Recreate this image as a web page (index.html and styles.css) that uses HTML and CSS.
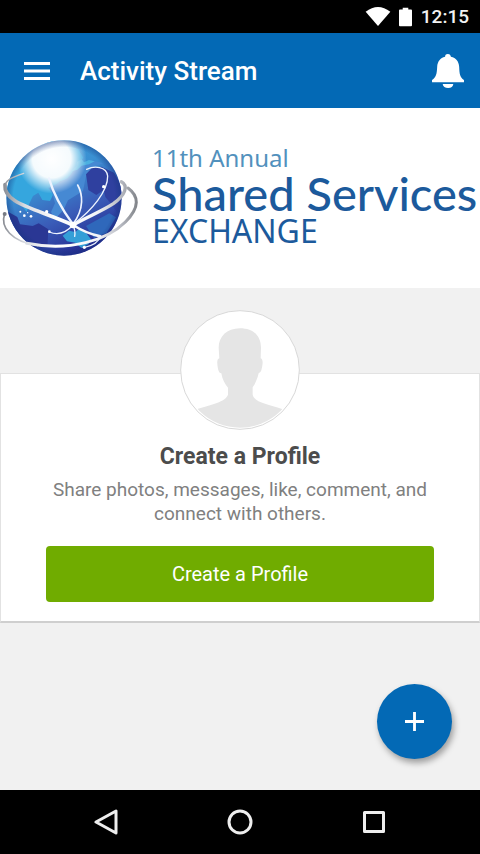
FILE: index.html
```html
<!DOCTYPE html>
<html lang="en">
<head>
<meta charset="utf-8">
<meta name="viewport" content="width=device-width, initial-scale=1">
<title>Activity Stream</title>
<link rel="stylesheet" href="styles.css">
</head>
<body>
<div class="status">
  <svg class="wifi" viewBox="0 0 26 20" aria-hidden="true"><path d="M0 5Q13-5 26 5L13 20Z"/></svg>
  <svg class="battery" viewBox="0 0 14 20" aria-hidden="true"><path d="M1 2h3V0h6v2h3q1 0 1 1v16q0 1-1 1H1q-1 0-1-1V3q0-1 1-1z"/></svg>
  <time class="clock">12:15</time>
</div>
<header class="appbar">
  <button class="icon-button" type="button" aria-label="Menu">
    <svg class="menu-icon" viewBox="0 0 26 18" aria-hidden="true"><path d="M0 1.5h26M0 9h26M0 16.500h26"/></svg>
  </button>
  <h1 class="title">Activity Stream</h1>
  <button class="icon-button" type="button" aria-label="Notifications">
    <svg class="bell-icon" viewBox="0 0 93 99" aria-hidden="true"><path d="M46 0c6 0 8 4 9 8 15 3 23 14 24 29 1 22 2 29 14 39v6H0v-6c12-10 14-17 15-39C16 22 24 11 38 8c0-4 2-8 8-8zM31 87h31c-1 7-6 12-15 12s-15-5-16-12z"/></svg>
  </button>
</header>
<main class="content">
  <section class="banner">
    <svg class="globe" viewBox="0 0 435 420" role="img" aria-label="Globe">
      <defs>
        <linearGradient id="sea" x1="0.2" y1="0" x2="0.700" y2="1"><stop offset="0" stop-color="#3b9bd8"/><stop offset=".35" stop-color="#3a90d2"/><stop offset=".65" stop-color="#3a5cb8"/><stop offset="1" stop-color="#22248a"/></linearGradient>
        <radialGradient id="shine" gradientUnits="userSpaceOnUse" cx="155" cy="98" r="105"><stop offset="0" stop-color="#fff"/><stop offset=".55" stop-color="#fff" stop-opacity=".95"/><stop offset="1" stop-color="#fff" stop-opacity="0"/></radialGradient>
        <radialGradient id="edge"><stop offset=".88" stop-color="#14347e" stop-opacity="0"/><stop offset="1" stop-color="#14347e" stop-opacity=".45"/></radialGradient>
        <linearGradient id="ring" gradientUnits="userSpaceOnUse" x1="10" y1="0" x2="412" y2="0"><stop offset="0" stop-color="#8a8d94"/><stop offset=".16" stop-color="#d9dce2"/><stop offset=".4" stop-color="#fff"/><stop offset=".7" stop-color="#f4f5f8"/><stop offset=".88" stop-color="#b5b8c0"/><stop offset="1" stop-color="#808388"/></linearGradient>
        <clipPath id="disc"><circle cx="192" cy="216" r="173"/></clipPath>
      </defs>
      <circle cx="192" cy="216" r="173" fill="url(#sea)"/>
      <g clip-path="url(#disc)">
        <path fill="#35a6de" d="M15 150L60 110 150 40 235 70 250 95 225 125 205 158 180 166 162 182 145 185 160 205 150 225 127 222 115 200 99 210 87 235 80 258 55 225 20 205z"/>
        <path fill="#4689d3" d="M152 183L202 157 235 120 275 103 311 112 285 120 258 150 249 195 204 223 190 253 164 280 153 258 165 232z"/>
        <path fill="#4cb0e0" d="M231 108l14-8 7 9 15-7 17 4-17 9-22 4-13 12-17 5 14-16z"/>
        <path fill="#2f409f" d="M258 145L275 127 304 122 342 140 370 190 355 265 332 232 316 213 311 192 289 207 265 192z"/>
        <path fill="#2a3794" d="M20 255L52 273 60 295 98 300 116 292 145 310 142 364 90 365 30 312z"/>
        <path fill="#349fd7" d="M188 329l19-15 19 4 14-12 18 14 15 20-7 14-22 12-18-16-25-4z"/>
        <path fill="#2f68bb" d="M258 300l70-38 20 12-28 47-38 15z"/>
        <circle cx="155" cy="98" r="105" fill="url(#shine)"/>
        <circle cx="192" cy="216" r="173" fill="url(#edge)"/>
      </g>
      <g fill="none" stroke="url(#ring)" stroke-linecap="round">
        <path stroke-width="4" d="M71 142C45 151 22 158 16 175"/>
        <path stroke-width="11" d="M15 176C10 232 100 245 219 297"/>
        <path stroke-width="8" d="M219 297C247 315 276 326 301 331"/>
        <path stroke-width="10" d="M364 167C386 179 376 208 340 233C305 256 265 271 219 297"/>
        <path stroke-width="5" d="M14 263C0 303 34 348 113 358"/>
        <path stroke-width="9" d="M80 352C210 378 322 342 376 288C421 243 416 210 384 186"/>
      </g>
      <g fill="none" stroke="#edf3ff" stroke-linecap="round">
        <path stroke-width="7" d="M147 157Q166 223 219 295"/>
        <path stroke-width="5" d="M219 295C254 247 248 204 233 177"/>
        <path stroke-width="4" d="M219 295C276 253 324 195 323 150C320 120 282 119 260 130"/>
        <path stroke-width="4" d="M219 297Q186 334 148 318M219 297Q227 315 224 331M301 331Q294 355 254 364"/>
      </g>
      <g fill="#fff"><circle cx="219" cy="297" r="10"/><circle cx="140" cy="257" r="5"/><circle cx="311" cy="182" r="5"/><circle cx="253" cy="364" r="5"/><circle cx="93" cy="271" r="4"/><circle cx="73" cy="269" r="4"/><circle cx="61" cy="257" r="3"/><circle cx="83" cy="260" r="2"/><circle cx="148" cy="317" r="4"/></g>
      <circle cx="14" cy="264" r="6" fill="#777b83"/>
    </svg>
    <div class="brand">
      <p class="brand-small">11th Annual</p>
      <p class="brand-name">Shared Services</p>
      <p class="brand-sub">EXCHANGE</p>
    </div>
  </section>
  <section class="card">
    <svg class="avatar" viewBox="0 0 360 360" aria-hidden="true">
      <defs><clipPath id="face"><circle cx="180" cy="180" r="173"/></clipPath></defs>
      <circle cx="180" cy="180" r="178" fill="#fff" stroke="#d8d8d8" stroke-width="3"/>
      <path clip-path="url(#face)" fill="#e5e5e5" d="M180 55C220 55 243 78 243 113L242 145C251 148 248 165 244 181C241 189 238 188 236 190C232 208 225 222 218 232V254C225 279 265 282 306 297L340 370H20L52 297C94 284 136 276 144 254V233C135 223 127 209 124 190C115 190 113 173 112 162C111 151 113 147 118 145L116 113C116 80 140 55 180 55Z"/>
    </svg>
    <h2 class="card-title">Create a Profile</h2>
    <p class="card-text">Share photos, messages, like, comment, and connect with others.</p>
    <button class="primary" type="button">Create a Profile</button>
  </section>
  <button class="fab" type="button" aria-label="Add">
    <svg class="plus" viewBox="0 0 20 20" aria-hidden="true"><path d="M10 0v20M0 10h20"/></svg>
  </button>
</main>
<nav class="navbar" aria-label="System">
  <button class="nav-button" type="button" aria-label="Back"><svg class="nav-icon" viewBox="0 0 26 26" aria-hidden="true"><path d="M23 2v22L3 13z"/></svg></button>
  <button class="nav-button" type="button" aria-label="Home"><svg class="nav-icon" viewBox="0 0 26 26" aria-hidden="true"><circle cx="13" cy="13" r="11"/></svg></button>
  <button class="nav-button" type="button" aria-label="Recent apps"><svg class="nav-icon" viewBox="0 0 26 26" aria-hidden="true"><path d="M3.500 3.500h19v19h-19z"/></svg></button>
</nav>
</body>
</html>
```
FILE: styles.css
```css
* { box-sizing: border-box; }

body {
  margin: 0;
  min-height: 100vh;
  display: flex;
  flex-direction: column;
  background: #f1f1f1;
  font-family: Roboto, "Liberation Sans", sans-serif;
}

h1, h2, p { margin: 0; }

svg { display: block; flex: none; }

button {
  border: 0;
  padding: 0;
  font: inherit;
  cursor: pointer;
}

.status {
  display: flex;
  align-items: center;
  justify-content: flex-end;
  height: 33px;
  padding: 0 11px;
  background: #000;
  color: #f2f2f2;
}

.wifi { width: 26px; height: 19px; margin-right: 8px; fill: #fff; }
.battery { width: 13px; height: 20px; margin-right: 9px; fill: #fff; }
.clock { font-size: 19px; font-weight: 500; line-height: 24px; }

.appbar {
  display: flex;
  align-items: center;
  height: 75px;
  padding: 0 16px 0 24px;
  background: #0369b5;
  color: #fff;
}

.icon-button { background: none; }
.menu-icon { width: 26px; height: 18px; fill: none; stroke: #fff; stroke-width: 3; }
.bell-icon { width: 32px; height: 34px; fill: #fff; }

.title {
  flex: 1;
  padding-left: 30px;
  font-size: 26px;
  font-weight: 500;
  line-height: 32px;
}

.content {
  flex: 1;
  position: relative;
}

.banner {
  display: flex;
  align-items: center;
  height: 180px;
  padding-bottom: 5px;
  background: #fff;
}

.globe { width: 145px; height: 140px; }

.brand {
  padding-left: 7px;
  font-family: Lato, "Open Sans", sans-serif;
  color: #1c5a9c;
  white-space: nowrap;
}

.brand-small { font-family: "Noto Sans", sans-serif; font-size: 24px; line-height: 26px; color: #5291bd; }
.brand-name { font-size: 47px; line-height: 44px; font-weight: 500; }
.brand-sub { font-family: "Noto Sans", sans-serif; font-size: 32px; line-height: 32px; }

.card {
  display: flex;
  flex-direction: column;
  align-items: center;
  margin-top: 85px;
  padding: 0 45px 19px;
  background: #fff;
  border: 1px solid #e2e2e2;
  border-bottom: 2px solid #cfcfcf;
}

.avatar { width: 120px; height: 120px; margin-top: -64px; }

.card-title {
  margin-top: 12px;
  font-size: 23px;
  font-weight: 700;
  line-height: 30px;
  color: #4c4c4c;
}

.card-text {
  margin-top: 6px;
  font-size: 19px;
  line-height: 24px;
  text-align: center;
  color: #808080;
}

.primary {
  width: 100%;
  height: 56px;
  margin-top: 20px;
  border-radius: 4px;
  background: #70ac00;
  color: #fff;
  font-size: 20px;
}

.fab {
  position: absolute;
  right: 28px;
  bottom: 31px;
  display: grid;
  place-items: center;
  width: 75px;
  height: 75px;
  border-radius: 50%;
  background: #0369b5;
  box-shadow: 2px 4px 6px rgba(0, 0, 0, 0.35);
}

.plus { width: 19px; height: 19px; stroke: #fff; stroke-width: 3; }

.navbar {
  display: flex;
  justify-content: center;
  height: 64px;
  background: #000;
}

.nav-button {
  display: grid;
  place-items: center;
  width: 28%;
  background: none;
}

.nav-icon {
  width: 26px;
  height: 26px;
  fill: none;
  stroke: #eee;
  stroke-width: 3;
  stroke-linejoin: round;
}
```
